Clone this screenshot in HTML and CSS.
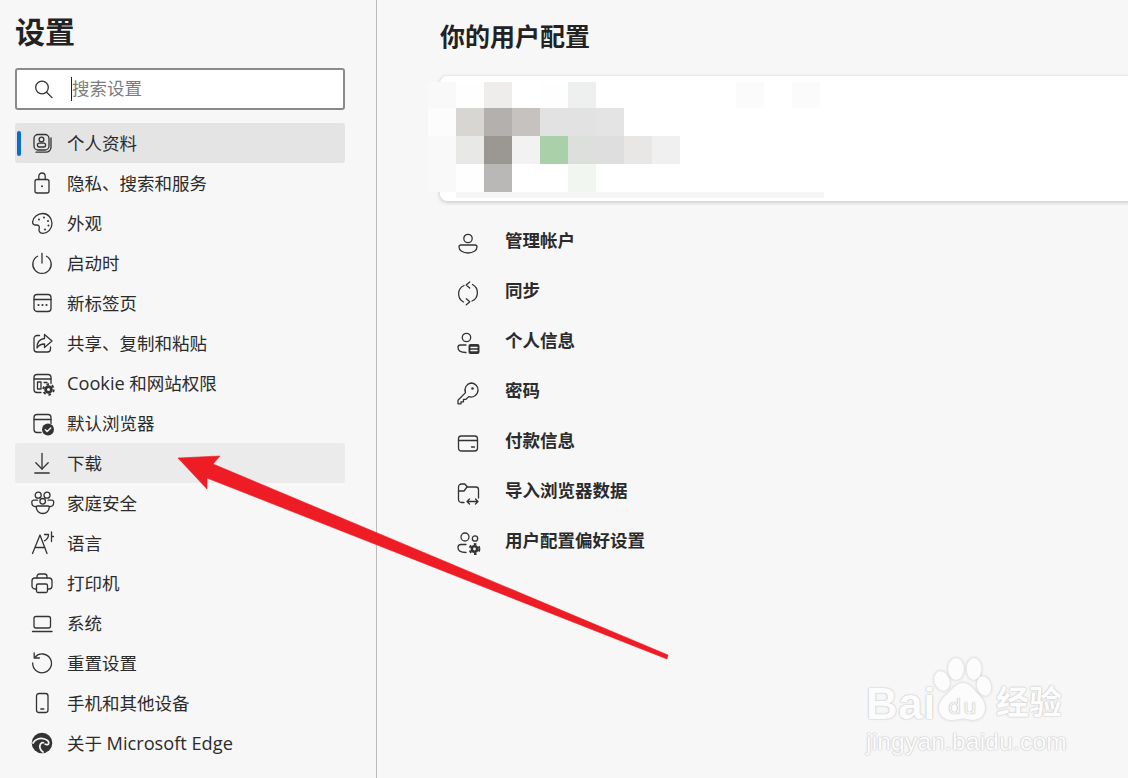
FILE: index.html
```html
<!DOCTYPE html>
<html lang="zh-CN">
<head>
<meta charset="utf-8">
<title>设置</title>
<link rel="stylesheet" href="styles.css">
</head>
<body>
<div class="page">
  <aside class="side">
    <h1 class="side-title">设置</h1>
    <div class="search">
      <svg class="ic search-ic" viewBox="0 0 24 24"><circle cx="11" cy="10.500" r="6.300"/><path d="M15.600 15.200l5.400 5.400"/></svg>
      <span class="caret"></span><span class="search-ph">搜索设置</span>
    </div>
    <nav class="nav">
      <a class="nav-item active"><svg class="ic" viewBox="0 0 24 24"><rect x="4" y="3.500" width="15" height="15.500" rx="4"/><path d="M6 21.200h10a5 5 0 0 0 5-5V7"/><circle cx="11.500" cy="8.600" r="2.400"/><rect x="7.400" y="12.200" width="8.200" height="3.800" rx="1.900"/></svg><span>个人资料</span></a>
      <a class="nav-item"><svg class="ic" viewBox="0 0 24 24"><rect x="5" y="8.500" width="14" height="13.500" rx="2"/><path d="M8.800 8.500V5.200a3.200 3.200 0 0 1 6.400 0v3.300"/><circle class="solid" cx="12" cy="15.200" r="1"/></svg><span>隐私、搜索和服务</span></a>
      <a class="nav-item"><svg class="ic" viewBox="0 0 24 24"><path d="M13 2.500C7.500 2.500 3 6.500 2.600 10.800c-.2 2.200 1.300 3.200 3.100 3.200 1.700 0 3-.3 3.500 1.400.5 2-.6 2.700-.1 4.500.5 1.700 2 2.400 3.900 2.400 5 0 9-4.500 9-9.800S18 2.500 13 2.500z"/><g class="solid-g"><circle cx="9" cy="8.500" r="1"/><circle cx="14" cy="6.500" r="1"/><circle cx="18" cy="10" r="1"/><circle cx="18.500" cy="14.500" r="1"/><circle cx="15" cy="18.500" r="1"/></g></svg><span>外观</span></a>
      <a class="nav-item"><svg class="ic" viewBox="0 0 24 24"><path d="M12 2.500v9.500"/><path d="M7.500 5.200A9.200 9.200 0 1 0 16.500 5.200"/></svg><span>启动时</span></a>
      <a class="nav-item"><svg class="ic" viewBox="0 0 24 24"><rect x="4" y="3.500" width="17" height="17" rx="3"/><path d="M4 8.500h17"/><g class="solid-g"><circle cx="8.500" cy="14" r="1.100"/><circle cx="12.500" cy="14" r="1.100"/><circle cx="16.500" cy="14" r="1.100"/></g></svg><span>新标签页</span></a>
      <a class="nav-item"><svg class="ic" viewBox="0 0 24 24"><path d="M9.500 4.500H7a3 3 0 0 0-3 3V18a3 3 0 0 0 3 3h10.500a3 3 0 0 0 3-3v-2"/><path d="M14.500 3.500l7.500 6.500-7.500 6.500V13c-3.500 0-5.800 1.200-7.500 4 0-5.500 3-9 7.500-9.500z"/></svg><span>共享、复制和粘贴</span></a>
      <a class="nav-item"><svg class="ic" viewBox="0 0 24 24"><path d="M11 21.500H7a3 3 0 0 1-3-3V6.500a3 3 0 0 1 3-3h11a3 3 0 0 1 3 3v6"/><path d="M4 8h17"/><rect x="7.500" y="11" width="3.500" height="7"/><path d="M14 11.500h3"/><g class="gear"><circle cx="18.500" cy="18.500" r="4.200"/><circle class="gear-teeth" cx="18.500" cy="18.500" r="5.200"/><circle class="gear-hole" cx="18.500" cy="18.500" r="1.500"/></g></svg><span><span class="lat">Cookie</span> 和网站权限</span></a>
      <a class="nav-item"><svg class="ic" viewBox="0 0 24 24"><path d="M11 21.500H7a3 3 0 0 1-3-3V6.500a3 3 0 0 1 3-3h11a3 3 0 0 1 3 3v6"/><path d="M4 8.500h17"/><circle class="solid" cx="18" cy="18.500" r="6"/><path class="check" d="M15.300 18.700l1.900 1.900 3.500-3.700"/></svg><span>默认浏览器</span></a>
      <a class="nav-item hover"><svg class="ic" viewBox="0 0 24 24"><path d="M12 2.500v15.500"/><path d="M5.800 11.800l6.200 6.200 6.200-6.200"/><path d="M4.800 22h14.400"/></svg><span>下载</span></a>
      <a class="nav-item"><svg class="ic" viewBox="0 0 24 24"><circle cx="8.200" cy="4.200" r="3"/><circle cx="17" cy="4.200" r="3"/><circle cx="12.700" cy="10.300" r="2.800"/><path d="M7.500 9.200H3.800a2 2 0 0 0-2 2c0 2.600 1.600 4.500 4.200 4.500"/><path d="M18 9.200h3.700a2 2 0 0 1 2 2c0 2.600-1.600 4.500-4.200 4.500"/><path d="M7 15h11.500c.6 0 .7.500.7 1 0 3.800-2.800 6.500-6.400 6.500S6.300 19.800 6.300 16c0-.5.100-1 .7-1z"/></svg><span>家庭安全</span></a>
      <a class="nav-item"><svg class="ic" viewBox="0 0 24 24"><path d="M2.500 22.500L10 4l7 18.500M5 16.500h10"/><path d="M14.500 3.500h4c0 3.200-1.500 5-4 6.300M21.500 1v9.500M21.500 5.500h2"/></svg><span>语言</span></a>
      <a class="nav-item"><svg class="ic" viewBox="0 0 24 24"><path d="M7 7V5.500A2.500 2.500 0 0 1 9.500 3h5A2.500 2.500 0 0 1 17 5.500V7"/><path d="M6.500 18H5a3 3 0 0 1-3-3v-5a3 3 0 0 1 3-3h14a3 3 0 0 1 3 3v5a3 3 0 0 1-3 3h-1.500"/><rect x="6.500" y="13" width="11" height="8.500" rx="1.500"/></svg><span>打印机</span></a>
      <a class="nav-item"><svg class="ic" viewBox="0 0 24 24"><rect x="4" y="5.500" width="16.500" height="11.500" rx="2"/><path d="M2.500 20.500h19.500"/></svg><span>系统</span></a>
      <a class="nav-item"><svg class="ic" viewBox="0 0 24 24"><path d="M5 6.200A9.400 9.400 0 1 1 2.700 12"/><path d="M4.200 1.800v5.200h5.200"/></svg><span>重置设置</span></a>
      <a class="nav-item"><svg class="ic" viewBox="0 0 24 24"><rect x="6.500" y="2.500" width="11.500" height="19" rx="2.500"/><path d="M10.800 18h3"/></svg><span>手机和其他设备</span></a>
      <a class="nav-item"><svg class="ic" viewBox="0 0 24 24"><circle class="solid" cx="12" cy="12" r="10.300"/><path class="swirl" d="M3 12C5 8 10 6.500 14.500 8c3 1 4.500 3 4.200 4.500-.3 1.300-2.200 1.300-3.500.7"/><path class="swirl" d="M13 21c-3-2-4-5.500-2.500-8 .8-1.200 2-1.700 3-1.300"/></svg><span>关于 <span class="lat">Microsoft Edge</span></span></a>
    </nav>
  </aside>
  <main class="main">
    <h2 class="main-title">你的用户配置</h2>
    <section class="card"></section>
    <ul class="rows">
      <li class="row"><svg class="ic" viewBox="0 0 24 24"><circle cx="12" cy="7.500" r="4.200"/><path d="M5 14h14a2 2 0 0 1 2 2c0 3.500-4 6-9 6s-9-2.500-9-6a2 2 0 0 1 2-2z"/></svg><span>管理帐户</span></li>
      <li class="row"><svg class="ic" viewBox="0 0 24 24"><path d="M8 4.500A9.200 9.200 0 0 0 7.500 21"/><path d="M16 20A9.200 9.200 0 0 0 16.500 3.500"/><path d="M13.700 1l-3.500 3 3.500 3"/><path d="M10.300 17.800l3.500 3-3.500 3"/></svg><span>同步</span></li>
      <li class="row"><svg class="ic" viewBox="0 0 24 24"><circle cx="10.500" cy="6.500" r="4.200"/><path d="M10 14H4.500A2.500 2.500 0 0 0 2 16.500C2 19.500 5 21.500 10 21.500"/><rect class="solid" x="12.500" y="13" width="11" height="10" rx="2"/><path class="check" d="M15 16.500h6M15 19.500h6"/></svg><span>个人信息</span></li>
      <li class="row"><svg class="ic" viewBox="0 0 24 24"><path d="M15 2a7 7 0 0 1 7 7 7 7 0 0 1-9.300 6.600L10 18.300H7.500v2.500H5v2H2v-3.500l7.500-7.700A7 7 0 0 1 15 2z"/><circle class="solid" cx="16.500" cy="7.500" r="1.300"/></svg><span>密码</span></li>
      <li class="row"><svg class="ic" viewBox="0 0 24 24"><rect x="2.500" y="5" width="19" height="15" rx="2.800"/><path d="M2.500 9.500h19M15.500 16h3"/></svg><span>付款信息</span></li>
      <li class="row"><svg class="ic" viewBox="0 0 24 24"><path d="M8 21.500H5.500a3 3 0 0 1-3-3V6a3 3 0 0 1 3-3h3.300l2.700 3h8.500a2.500 2.500 0 0 1 2.500 2.500V17"/><path d="M2.500 10h5.500l3-4"/><path d="M11 20.500h11M13.500 18l-2.500 2.500 2.500 2.500M19.500 18l2.500 2.500-2.500 2.500"/></svg><span>导入浏览器数据</span></li>
      <li class="row"><svg class="ic" viewBox="0 0 24 24"><circle cx="9" cy="6" r="4"/><circle cx="19" cy="7.500" r="2.700"/><path d="M10 13.500H5A3 3 0 0 0 2 16.500C2 19.500 5 21.500 10 21.500"/><g class="gear"><circle cx="18.500" cy="18" r="3.900"/><circle class="gear-teeth" cx="18.500" cy="18" r="4.900"/><circle class="gear-hole" cx="18.500" cy="18" r="1.400"/></g></svg><span>用户配置偏好设置</span></li>
    </ul>
  </main>
</div>

<div class="mosaic">
  <i class="c1"></i><i class="c2"></i><i class="c3"></i><i></i><i class="c2"></i><i class="c4"></i><i></i><i></i><i></i><i></i><i></i><i class="c5"></i><i></i><i class="c5"></i>
  <i class="c6"></i><i class="c7"></i><i class="c8"></i><i class="c9"></i><i class="c10"></i><i class="c10"></i><i class="c11"></i><i></i><i></i><i></i><i></i><i></i><i></i><i></i>
  <i class="c1"></i><i class="c12"></i><i class="c13"></i><i class="c14"></i><i class="c15"></i><i class="c16"></i><i class="c17"></i><i class="c18"></i><i class="c19"></i><i></i><i></i><i></i><i></i><i></i>
  <i class="c1"></i><i class="c2"></i><i class="c20"></i><i></i><i></i><i class="c21"></i><i></i><i></i><i></i><i></i><i></i><i></i><i></i><i></i>
  <b class="strip"></b>
</div>

<svg class="arrow" viewBox="0 0 1128 778"><polygon points="178,458 220,456 213,464 668,655 667,659 207,478 207,489"/></svg>

<div class="mark">
  <svg class="paw" viewBox="0 0 60 66"><ellipse cx="22" cy="13" rx="8" ry="11"/><ellipse cx="40" cy="13" rx="7.500" ry="11"/><ellipse cx="8" cy="25" rx="7.500" ry="10" transform="rotate(-20 8 25)"/><ellipse cx="50" cy="30" rx="7" ry="10" transform="rotate(-15 50 30)"/><path d="M29 27c7 0 11 7 15 11 5 5 7 9 7 14 0 8-6 12-12 12-4 0-7-1.500-10-1.500S23 64 17 64c-6 0-12-4-12-12 0-5 3-9 8-14 5-4 9-11 16-11z"/></svg>
  <span class="mark-bai">Bai</span>
  <span class="mark-du">du</span>
  <span class="mark-cn">经验</span>
  <span class="mark-url">jingyan.baidu.com</span>
</div>
</body>
</html>
```

FILE: styles.css
```css
* { box-sizing: border-box; }
html, body { margin: 0; height: 100%; overflow: hidden; }
body {
  background: #f7f7f7;
  color: #262626;
  font-family: "Open Sans", "Noto Sans CJK SC", sans-serif;
}
.page { display: flex; height: 778px; }
.side {
  width: 377px;
  flex: none;
  border-right: 1px solid #bcbcbc;
  padding: 0 31px 0 15px;
}
.side-title {
  margin: 0;
  height: 68px;
  font-size: 30px;
  line-height: 63px;
  font-weight: 700;
  color: #222;
}
.search {
  height: 42px;
  display: flex;
  align-items: center;
  background: #fff;
  border: 2px solid #8a8a8a;
  border-radius: 3px;
  padding-left: 14px;
}
.search-ic { width: 24px; height: 24px; }
.caret { width: 1px; height: 24px; background: #222; margin-left: 16px; }
.search-ph { font-size: 17.5px; color: #7d7d7d; line-height: 24px; margin-bottom: 2px; }
.lat { font-size: 18.2px; line-height: 1; }
.nav { margin-top: 13px; display: flex; flex-direction: column; }
.nav-item {
  position: relative;
  height: 40px;
  display: flex;
  align-items: center;
  gap: 13px;
  padding-left: 15px;
  border-radius: 3px;
  font-size: 17.5px;
  color: #2b2b2b;
}
.nav-item > span { margin-bottom: 2px; }
.nav-item.active { background: #e4e4e4; }
.nav-item.active::before {
  content: "";
  position: absolute;
  left: 2px;
  top: 8px;
  width: 4px;
  height: 25px;
  border-radius: 2px;
  background: #0a6ccf;
}
.nav-item.hover { background: #ebebeb; }
.ic {
  width: 24px;
  height: 24px;
  flex: none;
  fill: none;
  stroke: #333;
  stroke-width: 1.3;
  stroke-linecap: round;
  stroke-linejoin: round;
  overflow: visible;
}
.ic .solid, .ic .solid-g { fill: #333; stroke: none; }
.ic .check { fill: none; stroke: #f7f7f7; stroke-width: 1.4; }
.ic .swirl { fill: none; stroke: #f7f7f7; stroke-width: 1.7; }
.ic .gear { fill: #333; stroke: none; }
.ic .gear-teeth { fill: none; stroke: #333; stroke-width: 2; stroke-dasharray: 2.6 2.85; stroke-linecap: butt; }
.ic .gear-hole { fill: #f7f7f7; }

.main { flex: 1; min-width: 0; padding-left: 63px; overflow: hidden; }
.main-title {
  margin: 0;
  height: 76px;
  font-size: 25px;
  line-height: 73px;
  font-weight: 700;
  color: #222;
}
.card {
  height: 125px;
  margin-right: -20px;
  background: #fff;
  border-radius: 7px;
  box-shadow: 0 1px 4px rgba(0, 0, 0, .22);
}
.rows { list-style: none; margin: 15px 0 0; padding: 0; }
.row {
  height: 50px;
  display: flex;
  align-items: center;
  gap: 25px;
  padding-left: 16px;
  font-size: 17.5px;
  font-weight: 700;
  color: #2b2b2b;
}
.row > span { margin-bottom: 4px; }
.row .ic { position: relative; top: 2px; }

/* pixelated (redacted) patch lying over the card */
.mosaic {
  position: absolute;
  left: 428px;
  top: 82px;
  display: grid;
  grid-template-columns: repeat(14, 28px);
  grid-template-rows: 26px 28px 28px 28px 6px;
}
.strip { grid-column: 2 / 15; background: #f6f6f6; margin-right: -4px; }
.c1 { background: #f9f9f9; }
.c2 { background: #fefefe; }
.c3 { background: #eeedeb; }
.c4 { background: #eef0ef; }
.c5 { background: #fbfbfb; }
.c6 { background: #fcfcfc; }
.c7 { background: #d7d6d3; }
.c8 { background: #b4b0ad; }
.c9 { background: #c5c2bf; }
.c10 { background: #e3e2e2; }
.c11 { background: #e4e4e4; }
.c12 { background: #e8e8e7; }
.c13 { background: #9b9792; }
.c14 { background: #f2f2f3; }
.c15 { background: #aad0aa; }
.c16 { background: #dcdfdc; }
.c17 { background: #dedede; }
.c18 { background: #e8e7e6; }
.c19 { background: #f0f0f0; }
.c20 { background: #b9b8b6; }
.c21 { background: #f1f6f1; }

/* annotation arrow */
.arrow { position: absolute; left: 0; top: 0; width: 1128px; height: 778px; pointer-events: none; }
.arrow polygon { fill: #ee1c25; stroke: #ee1c25; stroke-width: .6; stroke-linejoin: round; }

/* watermark */
.mark { position: absolute; left: 860px; top: 650px; width: 268px; height: 128px; }
.paw { position: absolute; left: 74px; top: 6px; width: 60px; height: 66px; fill: #fcfcfc; filter: drop-shadow(0 0 1.5px #c4c4c4); }
.mark-bai, .mark-du, .mark-cn, .mark-url {
  position: absolute;
  color: #fcfcfc;
  line-height: 1;
  white-space: nowrap;
  text-shadow: 0 0 2px #bdbdbd, 0 0 1px #c8c8c8;
}
.mark-bai { left: 6px; top: 32px; font: 700 44px/1 "Liberation Sans", sans-serif; letter-spacing: .5px; }
.mark-du { left: 88px; top: 47px; font: 400 21px/1 "DejaVu Sans", sans-serif; color: #f6f6f6; text-shadow: 0 0 1px #888; letter-spacing: 2px; }
.mark-cn { left: 136px; top: 34px; font: 700 33px/1 "Noto Sans CJK SC", sans-serif; }
.mark-url { left: 6px; top: 80px; font: 400 24.500px/1 "Liberation Sans", sans-serif; letter-spacing: .2px; }
```
